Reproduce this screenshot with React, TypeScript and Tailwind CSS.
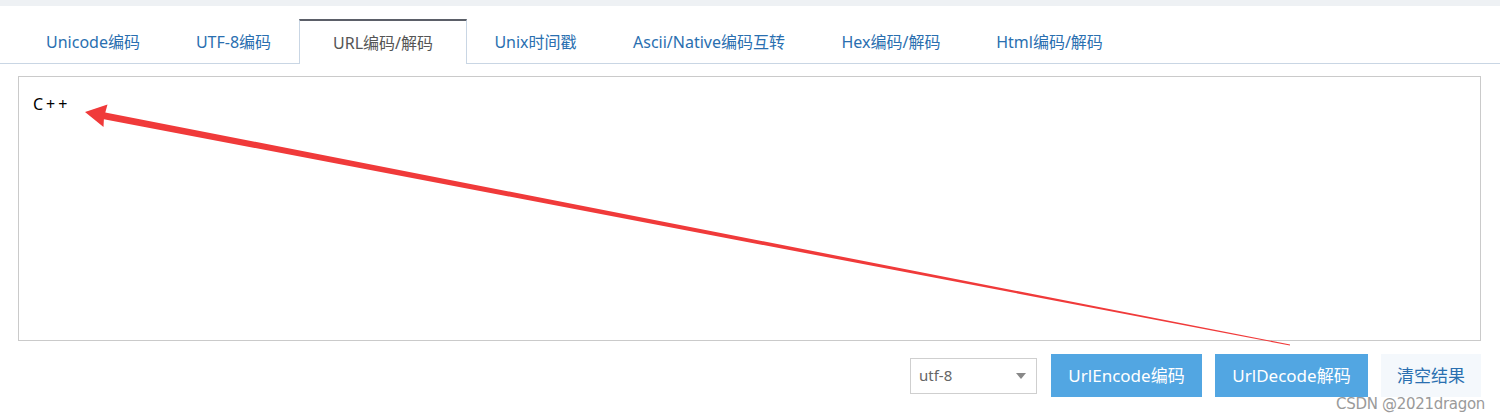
import React from "react";

const tabs = [
  { label: "Unicode编码", w: "w-[150px]" },
  { label: "UTF-8编码", w: "w-[131px]" },
  { label: "URL编码/解码", w: "w-[168px]", active: true },
  { label: "Unix时间戳", w: "w-[137px]" },
  { label: "Ascii/Native编码互转", w: "w-[210px]" },
  { label: "Hex编码/解码", w: "w-[154px]" },
  { label: "Html编码/解码", w: "w-[163px]" },
];

export default function App() {
  return (
    <div className="relative w-[1500px] h-[420px] bg-white overflow-hidden font-['Noto_Sans','Noto_Sans_CJK_SC',sans-serif]">
      <div className="h-[6px] bg-[#eef1f4]" />

      {/* tabs */}
      <div className="mt-[13px] flex h-[45px] border-b border-[#c9d6e4] pl-[18px]">
        {tabs.map((t) =>
          t.active ? (
            <div
              key={t.label}
              className={`${t.w} h-[45px] -mb-px flex items-center justify-center border-t-2 border-x border-t-[#5b5f68] border-x-[#c9d6e4] bg-white text-[16px] text-[#555]`}
            >
              {t.label}
            </div>
          ) : (
            <div
              key={t.label}
              className={`${t.w} flex items-center justify-center pt-[1px] text-[16px] text-[#2a6fb0]`}
            >
              {t.label}
            </div>
          )
        )}
      </div>

      {/* input area */}
      <div className="mx-[18px] mt-[12px] h-[265px] w-[1463px] border border-[#cacaca] px-[14px] pt-[15px] text-[16px] tracking-[3px] text-black">
        C++
      </div>

      {/* controls */}
      <div className="mt-[13px] flex items-center justify-end pr-[19px] h-[43px]">
        <div className="flex h-[36px] w-[127px] items-center justify-between border border-[#cfcfcf] pl-[8px] pr-[10px] text-[15px] text-[#666]">
          <span>utf-8</span>
          <span className="h-0 w-0 border-x-[5px] border-t-[6px] border-x-transparent border-t-[#888]" />
        </div>
        <button className="ml-[14px] h-[43px] w-[151px] bg-[#52a6e2] text-[17px] text-white">
          UrlEncode编码
        </button>
        <button className="ml-[13px] h-[43px] w-[153px] bg-[#52a6e2] text-[17px] text-white">
          UrlDecode解码
        </button>
        <button className="ml-[13px] h-[43px] w-[100px] bg-[#f4f8fc] text-[17px] text-[#2a6fb0]">
          清空结果
        </button>
      </div>

      {/* arrow annotation */}
      <svg className="absolute left-0 top-0 pointer-events-none" width="1500" height="420">
        <polygon
          fill="#f03a3a"
          points="85,112 107.5,104.5 105.3,112.4 1290.1,344.5 1289.9,345.5 103.9,119.2 103.5,127 "
        />
      </svg>

      <span className="absolute right-[15px] bottom-[5px] text-[15px] text-[#9a9a9a] font-['DejaVu_Sans',sans-serif] tracking-[-0.3px]">
        CSDN @2021dragon
      </span>
    </div>
  );
}
